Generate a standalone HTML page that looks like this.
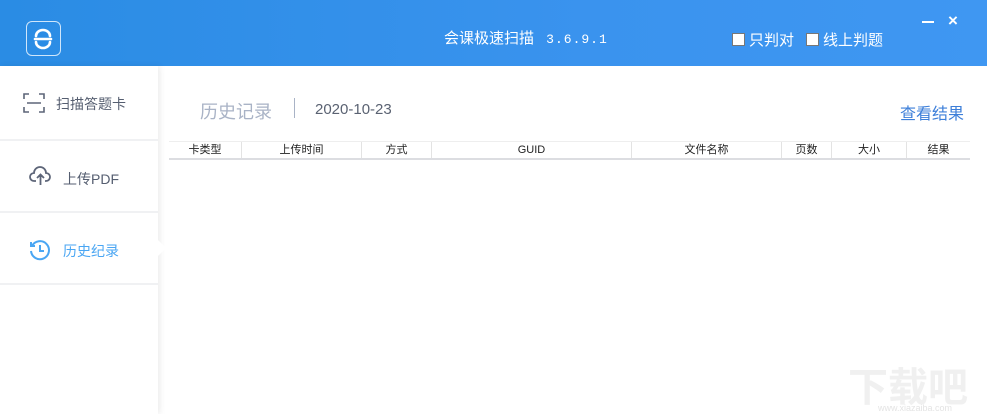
<!DOCTYPE html><html><head><meta charset="utf-8"><style>
*{margin:0;padding:0;box-sizing:border-box}
body{width:987px;height:414px;overflow:hidden;background:#fff;font-family:"Liberation Sans","Noto Sans CJK SC",sans-serif;position:relative}
.hd{position:absolute;left:0;top:0;width:987px;height:66px;background:linear-gradient(90deg,#2a8ce4,#3a93ee 60%,#3f97f2)}
.logo{position:absolute;left:26px;top:21px;width:35px;height:35px;border:1.5px solid #cfe6fb;border-radius:6px}
.t{position:absolute;color:#fff;font-size:15px}
.cb{display:inline-block;width:13px;height:13px;background:#fff;border:1px solid #777;vertical-align:-1px;margin-right:4px}
.sb{position:absolute;left:0;top:66px;width:158px;height:348px;background:#fff;box-shadow:2px 0 6px rgba(0,0,0,.08)}
.it{position:absolute;left:0;width:158px;height:72px;border-bottom:2px solid #f0f1f3;font-size:14px;color:#555e70}
.it span{position:absolute;top:28px}
.th{position:absolute;top:141px;left:169px;width:801px;height:19px;border-top:1px solid #eee;border-bottom:2px solid #dcdde1;display:flex;font-size:11px;color:#222}
.th div{border-right:1px solid #e3e3e3;text-align:center;line-height:17px}
</style></head><body>
<div class="hd">
<div class="logo"><svg width="32" height="32" viewBox="0 0 32 32"><g fill="none" stroke="#fff" stroke-width="2.6" stroke-linecap="round"><path d="M9 14a7 6 0 0 1 14 0"/><path d="M8 17h16"/><path d="M9 20a7 6 0 0 0 14 0"/></g></svg></div>
<div class="t" style="left:444px;top:27px">会课极速扫描 <span style="font-family:'Liberation Mono',monospace;font-size:13px;margin-left:8px;letter-spacing:1px">3.6.9.1</span></div>
<div class="t" style="left:732px;top:29px"><span class="cb"></span>只判对</div>
<div class="t" style="left:806px;top:29px"><span class="cb"></span>线上判题</div>
<div style="position:absolute;left:922px;top:21px;width:12px;height:2px;background:#fff"></div>
<div class="t" style="left:948px;top:11px;font-size:17px;font-weight:bold">×</div>
</div>
<div class="sb">
<div class="it" style="top:0;height:75px"><svg style="position:absolute;left:23px;top:27px" width="22" height="20" viewBox="0 0 22 20" fill="none" stroke="#5d6578" stroke-width="1.6"><path d="M1 6V1h5M16 1h5v5M21 14v5h-5M6 19H1v-5M4 10h14"/></svg><span style="left:56px">扫描答题卡</span></div>
<div class="it" style="top:75px"><svg style="position:absolute;left:29px;top:25px" width="23" height="20" viewBox="0 0 23 20" fill="none" stroke="#5d6578" stroke-width="1.8"><path d="M7 15H5a4 4 0 0 1 0-8 6 6 0 0 1 12 0 4 4 0 0 1 0 8h-1M11.5 19V9M8 12l3.5-3.5L15 12"/></svg><span style="left:63px">上传PDF</span></div>
<div class="it" style="top:147px"><svg style="position:absolute;left:29px;top:26px" width="22" height="22" viewBox="0 0 22 22" fill="none" stroke="#4aa6f3" stroke-width="2"><path d="M3 7a9 9 0 1 1-1 5M2 3v4h4M11 6v6h4"/></svg><span style="left:63px;color:#4aa6f3">历史纪录</span></div>
</div>
<div style="position:absolute;left:158px;top:240px;width:0;height:0;border-top:8px solid transparent;border-bottom:8px solid transparent;border-left:8px solid #fff"></div>
<div style="position:absolute;left:200px;top:98px;font-size:18px;color:#a9b3c6">历史记录</div>
<div style="position:absolute;left:294px;top:98px;width:1px;height:20px;background:#a9b3c6"></div>
<div style="position:absolute;left:315px;top:101px;font-size:15px;color:#5a6272">2020-10-23</div>
<div style="position:absolute;left:900px;top:100px;font-size:16px;color:#3d7fd9">查看结果</div>
<div class="th"><div style="width:73px">卡类型</div><div style="width:120px">上传时间</div><div style="width:70px">方式</div><div style="width:200px">GUID</div><div style="width:150px">文件名称</div><div style="width:50px">页数</div><div style="width:75px">大小</div><div style="width:63px;border:0">结果</div></div>
<div style="position:absolute;left:848px;top:355px;font-size:40px;color:#f0f0f0;font-weight:bold">下载吧</div>
<div style="position:absolute;left:878px;top:403px;font-size:9px;color:#e4e4e4">www.xiazaiba.com</div>
</body></html>
